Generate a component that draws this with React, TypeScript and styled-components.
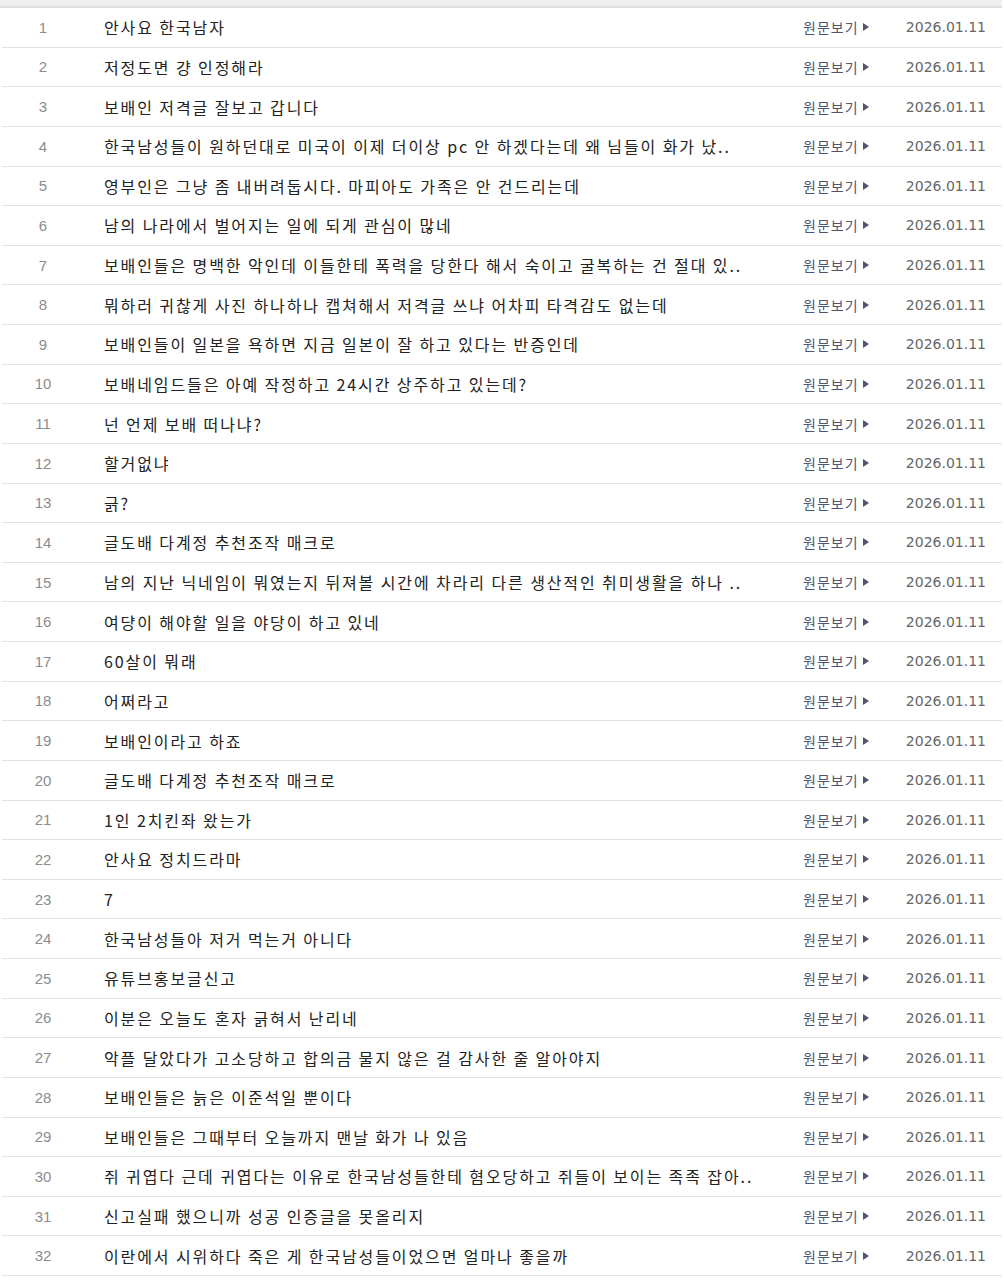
import React from "react";
import styled, { createGlobalStyle } from "styled-components";

const Global = createGlobalStyle`
  html, body { margin: 0; padding: 0; background: #fff; }
  body { font-family: "Noto Sans CJK KR", "Noto Sans", sans-serif; }
`;

const titles = [
  "안사요 한국남자",
  "저정도면 걍 인정해라",
  "보배인 저격글 잘보고 갑니다",
  "한국남성들이 원하던대로 미국이 이제 더이상 pc 안 하겠다는데 왜 님들이 화가 났..",
  "영부인은 그냥 좀 내버려둡시다. 마피아도 가족은 안 건드리는데",
  "남의 나라에서 벌어지는 일에 되게 관심이 많네",
  "보배인들은 명백한 악인데 이들한테 폭력을 당한다 해서 숙이고 굴복하는 건 절대 있..",
  "뭐하러 귀찮게 사진 하나하나 캡쳐해서 저격글 쓰냐 어차피 타격감도 없는데",
  "보배인들이 일본을 욕하면 지금 일본이 잘 하고 있다는 반증인데",
  "보배네임드들은 아예 작정하고 24시간 상주하고 있는데?",
  "넌 언제 보배 떠나냐?",
  "할거없냐",
  "긁?",
  "글도배 다계정 추천조작 매크로",
  "남의 지난 닉네임이 뭐였는지 뒤져볼 시간에 차라리 다른 생산적인 취미생활을 하나 ..",
  "여댱이 해야할 일을 야당이 하고 있네",
  "60살이 뭐래",
  "어쩌라고",
  "보배인이라고 하죠",
  "글도배 다계정 추천조작 매크로",
  "1인 2치킨좌 왔는가",
  "안사요 정치드라마",
  "7",
  "한국남성들아 저거 먹는거 아니다",
  "유튜브홍보글신고",
  "이분은 오늘도 혼자 긁혀서 난리네",
  "악플 달았다가 고소당하고 합의금 물지 않은 걸 감사한 줄 알아야지",
  "보배인들은 늙은 이준석일 뿐이다",
  "보배인들은 그때부터 오늘까지 맨날 화가 나 있음",
  "쥐 귀엽다 근데 귀엽다는 이유로 한국남성들한테 혐오당하고 쥐들이 보이는 족족 잡아..",
  "신고실패 했으니까 성공 인증글을 못올리지",
  "이란에서 시위하다 죽은 게 한국남성들이었으면 얼마나 좋을까",
];

const Board = styled.div`
  width: 1000px;
  margin-left: 2px;
`;

const HeaderBar = styled.div`
  height: 6px;
  width: 1002px;
  background: #efefef;
  border-bottom: 2px solid #dedede;
`;

const Row = styled.div`
  display: grid;
  grid-template-columns: 82px 700px 100px 118px;
  align-items: center;
  height: 38.625px;
  border-bottom: 1px solid #e3e3e3;
`;

const Num = styled.span`
  text-align: center;
  font-family: "Liberation Sans", "DejaVu Sans", sans-serif;
  font-size: 15px;
  color: #8c8c8c;
`;

const Title = styled.span`
  padding-left: 20px;
  font-size: 16px;
  letter-spacing: 1.9px;
  color: #222;
  white-space: nowrap;
  overflow: hidden;
`;

const Link = styled.span`
  display: flex;
  align-items: center;
  padding-left: 19px;
  font-size: 14px;
  letter-spacing: 1px;
  color: #4f5470;
`;

const Arrow = styled.span`
  display: inline-block;
  width: 0;
  height: 0;
  margin-left: 4px;
  border-top: 4px solid transparent;
  border-bottom: 4px solid transparent;
  border-left: 6px solid #4f5470;
`;

const DateCell = styled.span`
  text-align: right;
  padding-right: 16px;
  font-family: "DejaVu Sans", "Noto Sans", sans-serif;
  font-size: 14px;
  color: #666;
`;

export default function App() {
  return (
    <>
      <Global />
      <HeaderBar />
      <Board>
        {titles.map((t, i) => (
          <Row key={i}>
            <Num>{i + 1}</Num>
            <Title>{t}</Title>
            <Link>
              원문보기
              <Arrow />
            </Link>
            <DateCell>2026.01.11</DateCell>
          </Row>
        ))}
      </Board>
    </>
  );
}
